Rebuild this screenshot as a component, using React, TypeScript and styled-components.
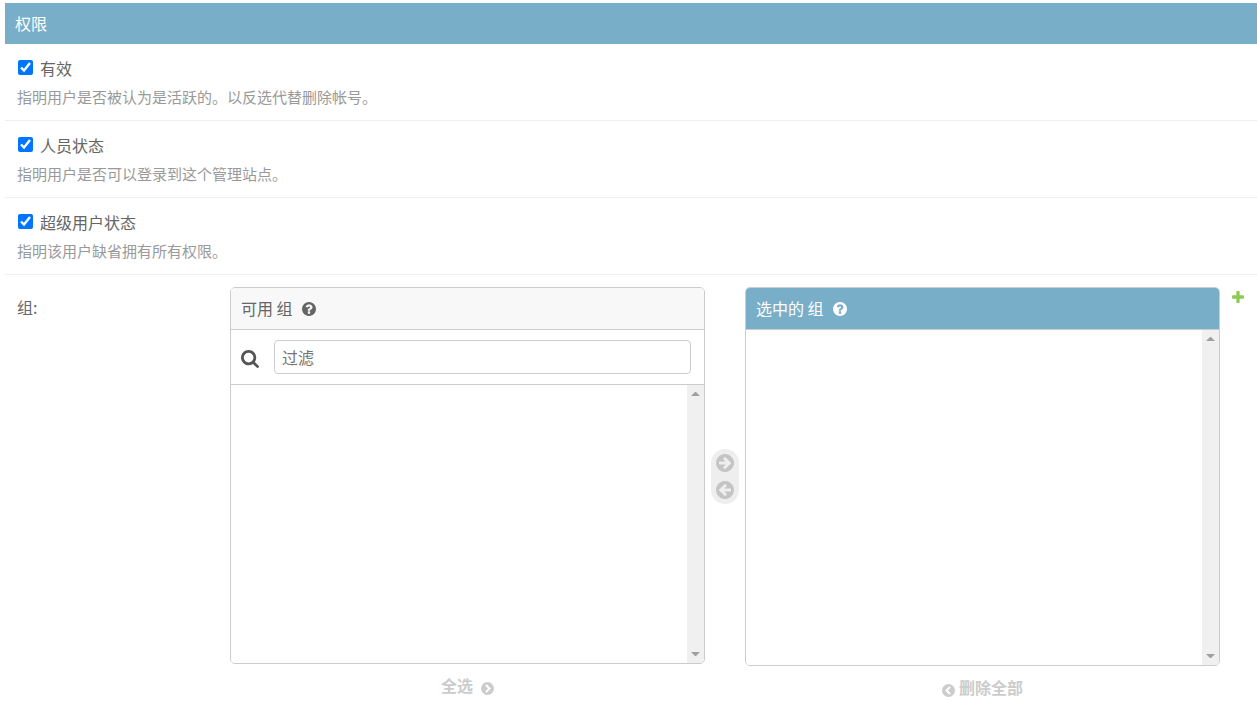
import React from "react";
import styled, { createGlobalStyle, css } from "styled-components";

const GlobalStyle = createGlobalStyle`
  * { box-sizing: border-box; }
  body {
    margin: 0;
    background: #fff;
    color: #666;
    font: 16px/24px "Noto Sans CJK SC", sans-serif;
  }
  button, input, select { font: inherit; }
`;

const Fieldset = styled.main`
  padding: 3px 0 0 5px;
`;

const Title = styled.h2`
  margin: 0;
  padding: 8px 10px 9px;
  background: #79aec8;
  color: #fff;
  font-size: 16px;
  font-weight: 400;
  line-height: 24px;
`;

const Row = styled.div`
  height: 77px;
  padding: 12px 12px 0;
  border-bottom: 1px solid #eee;
`;

const CheckLine = styled.div`
  display: flex;
  align-items: flex-start;
  gap: 7px;
`;

const Checkbox = styled.input`
  width: 15px;
  height: 15px;
  margin: 4px 0 0 1px;
`;

const Help = styled.p`
  margin: 6px 0 0;
  color: #999;
  font-size: 15px;
  line-height: 22px;
`;

const GroupRow = styled.div`
  display: flex;
  align-items: flex-start;
  padding: 12px 13px 0 12px;
`;

const GroupLabel = styled.label`
  flex: 0 0 213px;
  padding-top: 8px;
`;

const Selector = styled.div`
  flex: 1;
  display: flex;
  align-items: flex-start;
`;

const Column = styled.section`
  flex: 1 1 0;
  min-width: 0;
`;

const Panel = styled.div`
  border: 1px solid #ccc;
  border-radius: 5px;
  overflow: hidden;
`;

const PanelTitle = styled.h3<{ $chosen?: boolean }>`
  display: flex;
  align-items: center;
  gap: 9px;
  height: 42px;
  margin: 0;
  padding: 0 10px 2px;
  border-bottom: 1px solid #ccc;
  background: ${(p) => (p.$chosen ? "#79aec8" : "#f8f8f8")};
  color: ${(p) => (p.$chosen ? "#fff" : "#666")};
  font-size: 16px;
  font-weight: 400;
  svg { margin-top: 2px; }
`;

const Filter = styled.div`
  display: flex;
  align-items: center;
  gap: 15px;
  height: 55px;
  padding: 0 13px 0 10px;
  border-bottom: 1px solid #ccc;
`;

const FilterLabel = styled.label`
  display: flex;
  padding-top: 4px;
  color: #555;
`;

const FilterInput = styled.input`
  flex: 1;
  min-width: 0;
  height: 34px;
  padding: 0 7px;
  border: 1px solid #ccc;
  border-radius: 4px;
  outline: none;
  &::placeholder { color: #757575; opacity: 1; }
`;

const ListArea = styled.div<{ $height: number }>`
  display: flex;
  height: ${(p) => p.$height}px;
`;

const List = styled.select`
  flex: 1;
  min-width: 0;
  border: 0;
  outline: none;
  background: #fff;
`;

const Track = styled.div`
  display: flex;
  flex-direction: column;
  justify-content: space-between;
  align-items: center;
  width: 17px;
  padding: 7px 0;
  background: #f0f0f0;
  color: #a0a0a0;
`;

const Chooser = styled.div`
  display: flex;
  flex-direction: column;
  align-items: center;
  gap: 9px;
  width: 28px;
  margin: 162px 6px 0;
  padding: 5px 0;
  border-radius: 14px;
  background: #eee;
`;

const plainButton = css`
  padding: 0;
  border: 0;
  background: none;
  cursor: pointer;
`;

const MoveButton = styled.button`
  ${plainButton}
  display: flex;
  color: #c4c4c4;
`;

const Footer = styled.div`
  display: flex;
  justify-content: center;
  padding-top: 9px;
`;

const AllLink = styled.a<{ $gap: number }>`
  display: flex;
  align-items: center;
  gap: ${(p) => p.$gap}px;
  color: #ccc;
  font-weight: 700;
  text-decoration: none;
  svg { margin-top: 6px; }
`;

const AddLink = styled.a`
  display: flex;
  padding: 4px 0 0 12px;
  color: #8dcb55;
`;

const circle =
  "M1664 896q0 209-103 385.5t-279.5 279.5-385.5 103-385.5-103-279.5-279.5-103-385.5 103-385.5 279.5-279.5 385.5-103 385.5 103 279.5 279.5 103 385.5z";

const HelpIcon = () => (
  <svg width="14" height="14" viewBox="128 128 1536 1536" fill="currentColor" aria-hidden="true">
    <path fillRule="evenodd" d={"M1024 1376v-192q0-14-9-23t-23-9h-192q-14 0-23 9t-9 23v192q0 14 9 23t23 9h192q14 0 23-9t9-23zm256-672q0-88-55.5-163t-138.5-116-170-41q-243 0-371 213-15 24 8 42l132 100q7 6 19 6 16 0 25-12 53-68 86-92 34-24 86-24 48 0 85.5 26t37.5 59q0 38-20 61t-68 45q-63 28-115.5 86.5t-52.5 125.5v36q0 14 9 23t23 9h192q14 0 23-9t9-23q0-19 21.5-49.5t54.5-49.5q32-18 49-28.5t46-35 44.5-48 28-60.5 12.5-81z" + circle} />
  </svg>
);

const SearchIcon = () => (
  <svg width="18" height="18" viewBox="64 128 1664 1664" fill="currentColor" aria-hidden="true">
    <path d="M1216 832q0-185-131.5-316.5t-316.5-131.5-316.5 131.5-131.5 316.5 131.5 316.5 316.5 131.5 316.5-131.5 131.5-316.5zm512 832q0 52-38 90t-90 38q-54 0-90-38l-343-342q-179 124-399 124-143 0-273.5-55.5t-225-150-150-225-55.5-273.5 55.5-273.5 150-225 225-150 273.5-55.5 273.5 55.5 225 150 150 225 55.5 273.5q0 220-124 399l343 343q37 37 37 90z" />
  </svg>
);

const ArrowIcon = ({ left }: { left?: boolean }) => (
  <svg width="18" height="18" viewBox="128 128 1536 1536" fill="currentColor" aria-hidden="true">
    <g transform={left ? "translate(1792 0) scale(-1 1)" : undefined}>
      <path fillRule="evenodd" d={"M1413 896q0-27-18-45l-91-91-362-362q-18-18-45-18t-45 18l-91 91q-18 18-18 45t18 45l189 189h-502q-26 0-45 19t-19 45v128q0 26 19 45t45 19h502l-189 189q-19 19-19 45t19 45l91 91q18 18 45 18t45-18l362-362 91-91q18-18 18-45z" + circle} />
    </g>
  </svg>
);

const ChevronIcon = ({ left }: { left?: boolean }) => (
  <svg width="13" height="13" viewBox="0 0 26 26" aria-hidden="true">
    <circle cx="13" cy="13" r="13" fill="currentColor" />
    <path d={left ? "M16 6 9 13l7 7" : "M10 6l7 7-7 7"} fill="none" stroke="#fff" strokeWidth="4" />
  </svg>
);

const PlusIcon = () => (
  <svg width="12" height="12" viewBox="192 128 1408 1408" fill="currentColor" aria-hidden="true">
    <path d="M1600 736v192q0 40-28 68t-68 28h-416v416q0 40-28 68t-68 28h-192q-40 0-68-28t-28-68v-416h-416q-40 0-68-28t-28-68v-192q0-40 28-68t68-28h416v-416q0-40 28-68t68-28h192q40 0 68 28t28 68v416h416q40 0 68 28t28 68z" />
  </svg>
);

const Scrollbar = () => (
  <Track aria-hidden="true">
    <svg width="9" height="4" viewBox="0 0 9 4" fill="currentColor"><path d="M0 4 4 0h1l4 4z" /></svg>
    <svg width="9" height="4" viewBox="0 0 9 4" fill="currentColor"><path d="M0 0l4 4h1l4-4z" /></svg>
  </Track>
);

const flags = [
  { id: "is_active", label: "有效", help: "指明用户是否被认为是活跃的。以反选代替删除帐号。" },
  { id: "is_staff", label: "人员状态", help: "指明用户是否可以登录到这个管理站点。" },
  { id: "is_superuser", label: "超级用户状态", help: "指明该用户缺省拥有所有权限。" },
];

export default function App() {
  return (
    <>
      <GlobalStyle />
      <Fieldset>
        <Title>权限</Title>
        {flags.map((f) => (
          <Row key={f.id}>
            <CheckLine>
              <Checkbox type="checkbox" id={f.id} defaultChecked />
              <label htmlFor={f.id}>{f.label}</label>
            </CheckLine>
            <Help>{f.help}</Help>
          </Row>
        ))}
        <GroupRow>
          <GroupLabel htmlFor="groups_from">组:</GroupLabel>
          <Selector>
            <Column>
              <Panel>
                <PanelTitle>可用 组 <HelpIcon /></PanelTitle>
                <Filter>
                  <FilterLabel htmlFor="groups_filter" aria-label="过滤"><SearchIcon /></FilterLabel>
                  <FilterInput id="groups_filter" type="text" placeholder="过滤" />
                </Filter>
                <ListArea $height={278}>
                  <List id="groups_from" multiple />
                  <Scrollbar />
                </ListArea>
              </Panel>
              <Footer>
                <AllLink href="#all" $gap={8}>全选 <ChevronIcon /></AllLink>
              </Footer>
            </Column>
            <Chooser>
              <MoveButton type="button" aria-label="选择"><ArrowIcon /></MoveButton>
              <MoveButton type="button" aria-label="删除"><ArrowIcon left /></MoveButton>
            </Chooser>
            <Column>
              <Panel>
                <PanelTitle $chosen>选中的 组 <HelpIcon /></PanelTitle>
                <ListArea $height={335}>
                  <List aria-label="选中的 组" multiple />
                  <Scrollbar />
                </ListArea>
              </Panel>
              <Footer>
                <AllLink href="#clear" $gap={4}><ChevronIcon left /> 删除全部</AllLink>
              </Footer>
            </Column>
          </Selector>
          <AddLink href="#add" aria-label="增加"><PlusIcon /></AddLink>
        </GroupRow>
      </Fieldset>
    </>
  );
}
